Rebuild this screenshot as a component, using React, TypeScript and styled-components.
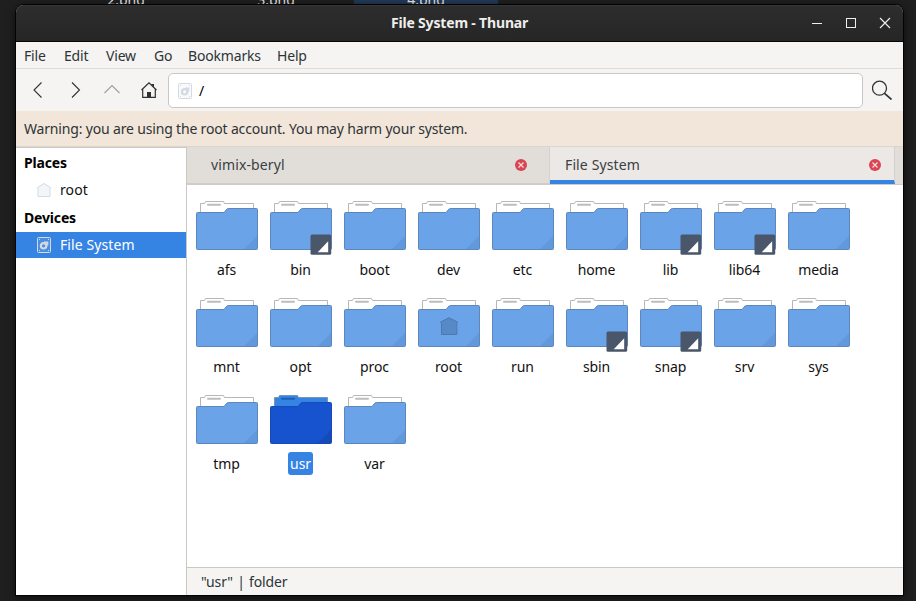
import React from "react";
import styled, { createGlobalStyle } from "styled-components";

const Global = createGlobalStyle`
  * { box-sizing: border-box; }
  body { margin: 0; overflow: hidden; }
  svg { display: block; flex: none; }
`;

const Desktop = styled.main`
  position: relative;
  width: 916px;
  height: 601px;
  overflow: hidden;
  background: #1f1f1f;
  font-family: "Noto Sans", sans-serif;
  font-size: 14px;
  line-height: 20px;
  letter-spacing: -0.17px;
  color: #2e3436;
`;

const DesktopLabel = styled.span<{ $x: number; $selected?: boolean }>`
  position: absolute;
  top: -10px;
  left: ${(p) => p.$x}px;
  width: 144px;
  height: 20px;
  text-align: center;
  letter-spacing: 0;
  color: #e8e8e8;
  background: ${(p) => (p.$selected ? "#213957" : "transparent")};
`;

const Window = styled.section`
  position: absolute;
  left: 16px;
  top: 5px;
  width: 887px;
  height: 590px;
  display: flex;
  flex-direction: column;
  border-radius: 8px 8px 0 0;
  box-shadow: 0 0 0 1px #030303, 0 2px 8px 1px rgba(0, 0, 0, 0.6);
  background: #f5f4f2;
`;

const TitleBar = styled.header`
  display: grid;
  grid-template-columns: 1fr auto 1fr;
  align-items: center;
  height: 37px;
  border-bottom: 1px solid #060606;
  border-radius: 8px 8px 0 0;
  background: linear-gradient(#2d2d2d, #262626);
  box-shadow: inset 0 1px #353535;
  color: #eeeeec;
`;

const Title = styled.h1`
  grid-column: 2;
  margin: 0;
  font-size: 14px;
  line-height: 20px;
  font-weight: 700;
`;

const WindowControls = styled.div`
  display: flex;
  justify-content: flex-end;
  gap: 18px;
  padding-right: 10px;
`;

const MenuBar = styled.nav`
  display: flex;
  height: 27px;
  padding: 4px 8px 0;
  border-bottom: 1px solid #dddcda;
`;

const MenuItem = styled.span<{ $w: number }>`
  width: ${(p) => p.$w}px;
  white-space: nowrap;
`;

const Toolbar = styled.div`
  display: flex;
  align-items: center;
  height: 42px;
  padding: 0 11px;
`;

const NavButton = styled.div<{ $w: number }>`
  display: flex;
  justify-content: center;
  width: ${(p) => p.$w}px;
`;

const PathField = styled.div`
  display: flex;
  align-items: center;
  gap: 6px;
  width: 695px;
  height: 35px;
  margin: 1px 9px 0 -7px;
  padding-left: 8px;
  border: 1px solid #cbc7c2;
  border-radius: 5px;
  background: #fff;
  color: #000;
`;

const Warning = styled.div`
  height: 36px;
  padding: 8px 8px 0;
  border-bottom: 1px solid #d9d5cf;
  background: #f2e6da;
`;

const Body = styled.div`
  display: grid;
  grid-template-columns: 171px 1fr;
  flex: 1;
  min-height: 0;
`;

const Sidebar = styled.aside`
  border-top: 1px solid #cdcac5;
  border-right: 1px solid #cbc7c2;
  padding-top: 1px;
  background: #fff;
  color: #000;
`;

const SideHeading = styled.h2`
  height: 28px;
  margin: 0;
  padding: 4px 8px;
  font-size: 14px;
  line-height: 20px;
  font-weight: 700;
`;

const SideItem = styled.div<{ $active?: boolean }>`
  display: flex;
  align-items: center;
  gap: 8px;
  height: ${(p) => (p.$active ? 26 : 27)}px;
  padding: 0 0 ${(p) => (p.$active ? 0 : 2)}px 20px;
  letter-spacing: 0.1px;
  color: ${(p) => (p.$active ? "#fff" : "#111")};
  background: ${(p) => (p.$active ? "#3584e4" : "transparent")};
`;

const Pane = styled.div`
  display: flex;
  flex-direction: column;
  min-width: 0;
`;

const Tabs = styled.div`
  display: flex;
  height: 38px;
  border-bottom: 1px solid #cfccc6;
  background: #e1deda;
`;

const Tab = styled.div<{ $active?: boolean }>`
  display: flex;
  align-items: center;
  justify-content: space-between;
  width: ${(p) => (p.$active ? 345 : 363)}px;
  height: 37px;
  padding: ${(p) => (p.$active ? "3px 13px 0 15px" : "0 22px 0 24px")};
  border-right: 1px solid #d5d1cd;
  border-bottom: ${(p) => (p.$active ? "4px solid #3584e4" : "1px solid #d0cdc7")};
  background: ${(p) => (p.$active ? "#ebe8e6" : "#e1deda")};
  letter-spacing: 0.12px;
  color: #3b4042;
`;

const Files = styled.div`
  display: grid;
  grid-template-columns: repeat(9, 74px);
  grid-auto-rows: 97px;
  flex: 1;
  padding: 9px 0 0 3px;
  background: #fff;
`;

const FileCell = styled.div`
  display: flex;
  flex-direction: column;
  align-items: center;
`;

const FileName = styled.span<{ $selected?: boolean }>`
  height: 23px;
  margin-right: 1px;
  padding: 2px 2px 1px;
  border-radius: 3px;
  letter-spacing: -0.1px;
  color: ${(p) => (p.$selected ? "#fff" : "#111")};
  background: ${(p) => (p.$selected ? "#3584e4" : "transparent")};
`;

const StatusBar = styled.footer`
  height: 28px;
  padding: 4px 14px;
  border-top: 1px solid #cbc7c2;
  white-space: pre;
  word-spacing: -1.3px;
`;

function DriveIcon({ color, fill }: { color: string; fill: string }) {
  return (
    <svg width="16" height="16" viewBox="0 0 16 16" fill="none" stroke={color}>
      <rect x="1.5" y="0.5" width="13" height="15" rx="1" fill={fill} />
      <path d="M3 2.5h1M12 2.5h1M3 13.5h1M12 13.5h1" />
      <circle cx="7.6" cy="8.8" r="2.7" strokeWidth="2.2" />
      <path d="M8 5.3h4.4M11.6 5v3.4" strokeWidth="1.4" />
    </svg>
  );
}

function CloseBadge() {
  return (
    <svg width="12" height="12" viewBox="0 0 12 12">
      <circle cx="6" cy="6" r="6" fill="#da4453" />
      <path d="M3.5 3.5l5 5M8.5 3.5l-5 5" stroke="#f3dfe0" strokeWidth="1.2" />
    </svg>
  );
}

type FolderProps = { selected?: boolean; link?: boolean; home?: boolean };

function FolderIcon({ selected, link, home }: FolderProps) {
  const front = selected ? "#1753cf" : "#6aa3e7";
  return (
    <svg width="72" height="64" viewBox="-4 0 72 64">
      <path
        d="M5.5 22V9.5h4l1-2h18l1 2h29V22z"
        fill={selected ? "#3584e4" : "#fff"}
        stroke={selected ? "#7795b5" : "#b7b7b7"}
      />
      <path d="M13 10.8h12" stroke={selected ? "#1f60b5" : "#bdbdbd"} strokeWidth="2" strokeLinecap="round" />
      <path
        d="M2.5 18.5h26.5l3-3.5q.5-.5 1.5-.5h28q1 0 1 1v39q0 1-1 1h-59q-1 0-1-1v-35q0-1 1-1z"
        fill={front}
        stroke={selected ? "#164ab6" : "#5b87bd"}
      />
      <path d="M62 42v13H49z" fill={selected ? "#154ab8" : "#6299dc"} />
      {home && (
        <path d="M32 24.8l8.5 4.2-.7 1.3V41.5H24.5V30.3l-1-1.3z" fill="#5789c7" stroke="#4c79b5" transform="translate(0 2)" />
      )}
      {link && (
        <g transform="translate(-0.8 0.2)">
          <rect x="42.3" y="40.3" width="20.7" height="20.2" rx="1.5" fill="#4a5669" />
          <path d="M60 47v11H49.5z" fill="#fff" />
        </g>
      )}
    </svg>
  );
}

const files: { name: string; link?: boolean; home?: boolean; selected?: boolean }[] = [
  { name: "afs" },
  { name: "bin", link: true },
  { name: "boot" },
  { name: "dev" },
  { name: "etc" },
  { name: "home" },
  { name: "lib", link: true },
  { name: "lib64", link: true },
  { name: "media" },
  { name: "mnt" },
  { name: "opt" },
  { name: "proc" },
  { name: "root", home: true },
  { name: "run" },
  { name: "sbin", link: true },
  { name: "snap", link: true },
  { name: "srv" },
  { name: "sys" },
  { name: "tmp" },
  { name: "usr", selected: true },
  { name: "var" },
];

const menu: [string, number][] = [
  ["File", 40],
  ["Edit", 42],
  ["View", 48],
  ["Go", 34],
  ["Bookmarks", 89],
  ["Help", 40],
];

export default function App() {
  return (
    <Desktop>
      <Global />
      <DesktopLabel $x={54}>2.png</DesktopLabel>
      <DesktopLabel $x={204}>3.png</DesktopLabel>
      <DesktopLabel $x={354} $selected>4.png</DesktopLabel>
      <Window>
        <TitleBar>
          <Title>File System - Thunar</Title>
          <WindowControls>
            <svg width="16" height="16" fill="none" stroke="#eeeeec"><path d="M3 8.5h10" /></svg>
            <svg width="16" height="16" fill="none" stroke="#eeeeec"><rect x="3.5" y="3.5" width="9" height="9" /></svg>
            <svg width="16" height="16" fill="none" stroke="#eeeeec" strokeWidth="1.2"><path d="M3 3l10 10M13 3L3 13" /></svg>
          </WindowControls>
        </TitleBar>
        <MenuBar>
          {menu.map(([label, w]) => <MenuItem key={label} $w={w}>{label}</MenuItem>)}
        </MenuBar>
        <Toolbar>
          <NavButton $w={22}>
            <svg width="16" height="16" fill="none" stroke="#2e3436" strokeWidth="1.1"><path d="M11.5 .5L4 8l7.5 7.5" /></svg>
          </NavButton>
          <NavButton $w={52}>
            <svg width="16" height="16" fill="none" stroke="#2e3436" strokeWidth="1.1"><path d="M5 .5L12.5 8L5 15.5" /></svg>
          </NavButton>
          <NavButton $w={22}>
            <svg width="16" height="16" fill="none" stroke="#a0a2a1" strokeWidth="1.2"><path d="M.5 11L8 3.5l7.5 7.5" /></svg>
          </NavButton>
          <NavButton $w={52}>
            <svg width="16" height="16" fill="none" stroke="#2e3436" strokeWidth="1.2">
              <path d="M.5 8L8 .8 15.5 8M1.7 7v8.4h12.6V7" />
              <path d="M10 2h3v4z" fill="#2e3436" stroke="none" />
              <path d="M6 15v-5h4v5z" fill="#2e3436" stroke="none" />
            </svg>
          </NavButton>
          <PathField>
            <DriveIcon color="#d3dae3" fill="#f9fafc" />
            <span>/</span>
          </PathField>
          <svg width="20" height="20" fill="none" stroke="#2e3436" strokeWidth="1.3">
            <circle cx="7.5" cy="8.2" r="7" />
            <path d="M12.5 13.3l7 6.2" strokeWidth="1.7" />
          </svg>
        </Toolbar>
        <Warning>Warning: you are using the root account. You may harm your system.</Warning>
        <Body>
          <Sidebar>
            <SideHeading>Places</SideHeading>
            <SideItem>
              <svg width="16" height="16" viewBox="0 0 16 16" fill="#f3f5f8" stroke="#d3dae3">
                <path d="M1.3 5.8L8 1.5l6.7 4.3-.7 1v7.7H2V6.8z" />
              </svg>
              root
            </SideItem>
            <SideHeading>Devices</SideHeading>
            <SideItem $active>
              <DriveIcon color="#d3dae3" fill="#4b8ee0" />
              File System
            </SideItem>
          </Sidebar>
          <Pane>
            <Tabs>
              <Tab><span>vimix-beryl</span><CloseBadge /></Tab>
              <Tab $active><span>File System</span><CloseBadge /></Tab>
            </Tabs>
            <Files>
              {files.map((f) => (
                <FileCell key={f.name}>
                  <FolderIcon selected={f.selected} link={f.link} home={f.home} />
                  <FileName $selected={f.selected}>{f.name}</FileName>
                </FileCell>
              ))}
            </Files>
            <StatusBar>{'"usr"  |  folder'}</StatusBar>
          </Pane>
        </Body>
      </Window>
    </Desktop>
  );
}
